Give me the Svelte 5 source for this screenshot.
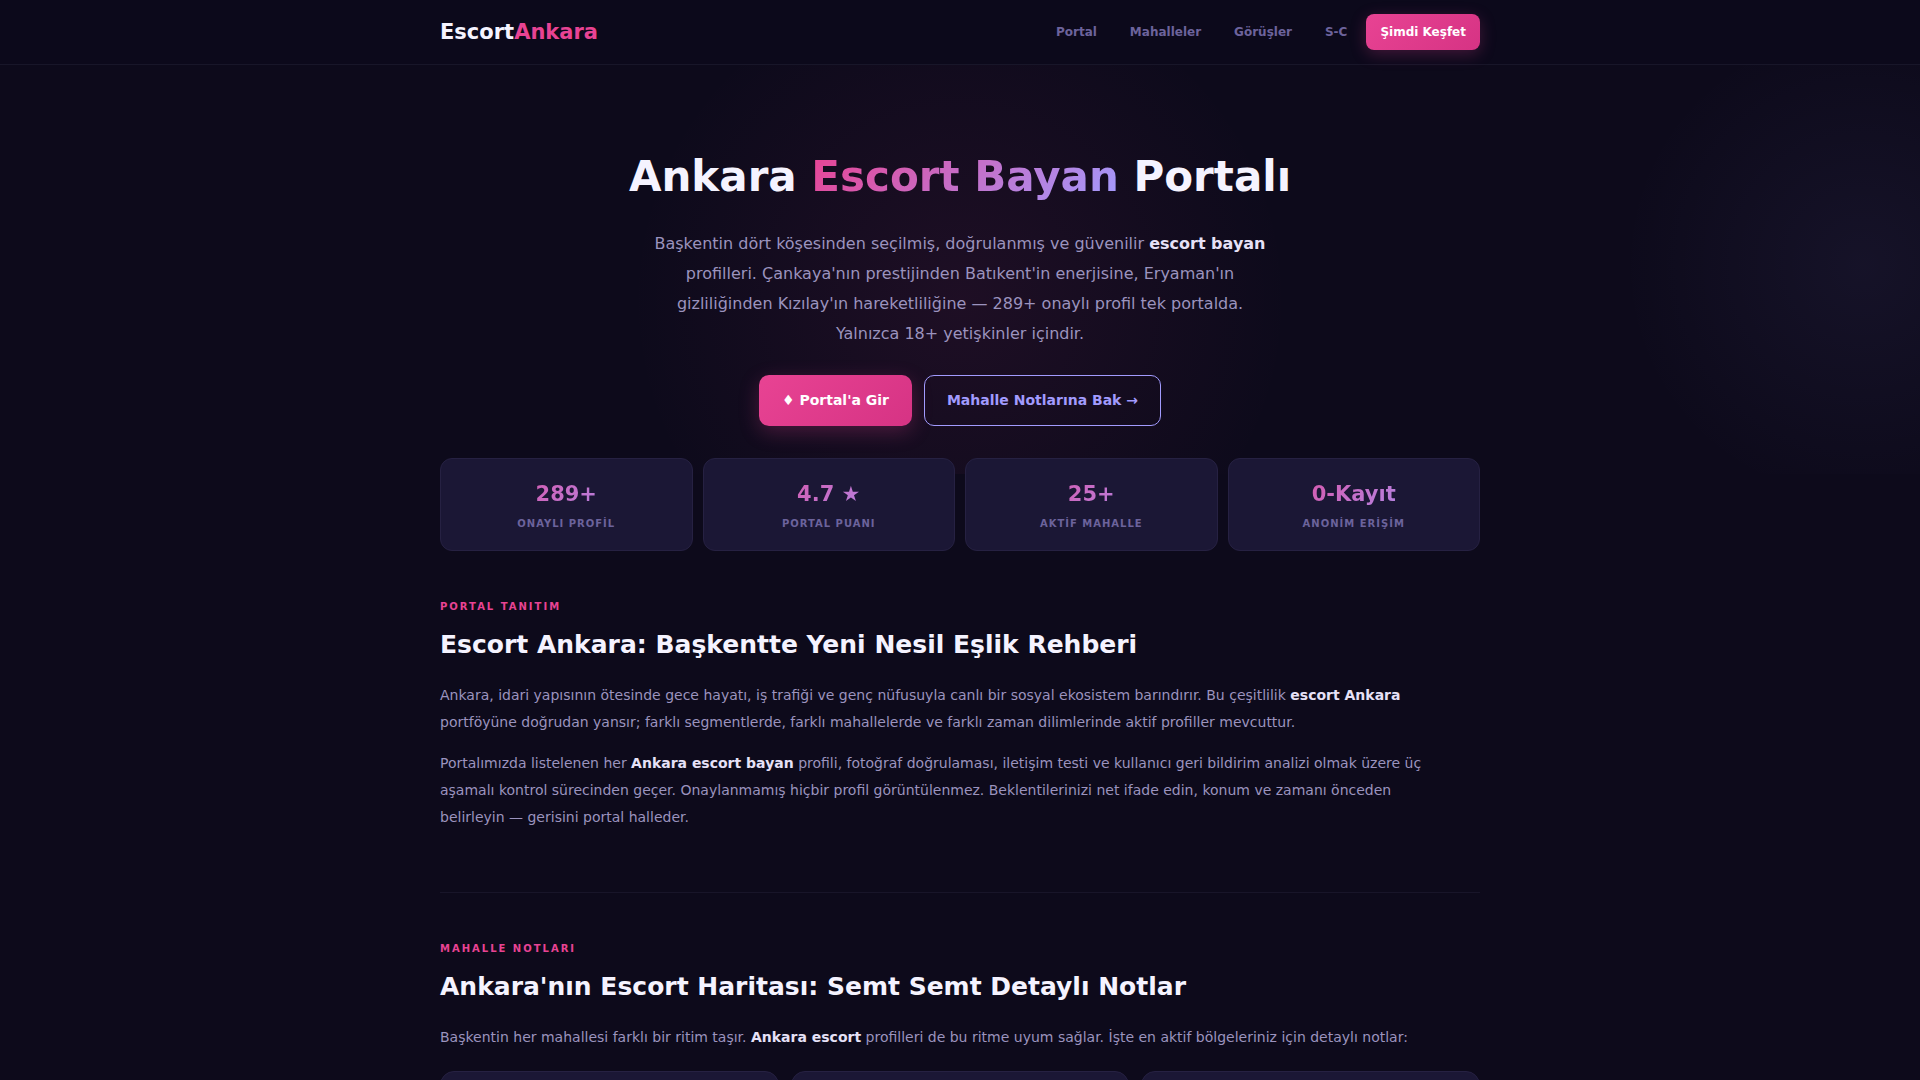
<script lang="ts">
  type Link = { label: string; href: string };
  type Stat = { value: string; label: string };

  const links: Link[] = [
    { label: 'Portal', href: '#portal' },
    { label: 'Mahalleler', href: '#mahalleler' },
    { label: 'Görüşler', href: '#gorusler' },
    { label: 'S-C', href: '#sc' }
  ];

  const stats: Stat[] = [
    { value: '289+', label: 'Onaylı Profil' },
    { value: '4.7 ★', label: 'Portal Puanı' },
    { value: '25+', label: 'Aktif Mahalle' },
    { value: '0-Kayıt', label: 'Anonim Erişim' }
  ];

  // Neighbourhood cards below the fold
  const cards = [1, 2, 3];
</script>

<div class="page" lang="tr">
  <header class="header">
    <div class="container bar">
      <a class="logo" href="#top">Escort<span>Ankara</span></a>
      <nav class="nav">
        {#each links as link}
          <a class="nav-link" href={link.href}>{link.label}</a>
        {/each}
        <a class="nav-cta" href="#portal">Şimdi Keşfet</a>
      </nav>
    </div>
  </header>

  <main class="container">
    <section class="hero" id="top">
      <h1>Ankara <span class="gradient">Escort Bayan</span> Portalı</h1>
      <p class="lead">
        Başkentin dört köşesinden seçilmiş, doğrulanmış ve güvenilir <strong>escort bayan</strong>
        profilleri. Çankaya'nın prestijinden Batıkent'in enerjisine, Eryaman'ın gizliliğinden
        Kızılay'ın hareketliliğine — 289+ onaylı profil tek portalda. Yalnızca 18+ yetişkinler
        içindir.
      </p>
      <div class="actions">
        <a class="btn primary" href="#portal">♦ Portal'a Gir</a>
        <a class="btn outline" href="#mahalleler">Mahalle Notlarına Bak →</a>
      </div>
    </section>

    <div class="stats">
      {#each stats as stat}
        <div class="stat">
          <div class="stat-value gradient">{stat.value}</div>
          <div class="stat-label">{stat.label}</div>
        </div>
      {/each}
    </div>

    <section class="section" id="portal">
      <div class="eyebrow">Portal Tanıtım</div>
      <h2>Escort Ankara: Başkentte Yeni Nesil Eşlik Rehberi</h2>
      <p>
        Ankara, idari yapısının ötesinde gece hayatı, iş trafiği ve genç nüfusuyla canlı bir sosyal
        ekosistem barındırır. Bu çeşitlilik <strong>escort Ankara</strong> portföyüne doğrudan
        yansır; farklı segmentlerde, farklı mahallelerde ve farklı zaman dilimlerinde aktif
        profiller mevcuttur.
      </p>
      <p>
        Portalımızda listelenen her <strong>Ankara escort bayan</strong> profili, fotoğraf
        doğrulaması, iletişim testi ve kullanıcı geri bildirim analizi olmak üzere üç aşamalı
        kontrol sürecinden geçer. Onaylanmamış hiçbir profil görüntülenmez. Beklentilerinizi net
        ifade edin, konum ve zamanı önceden belirleyin — gerisini portal halleder.
      </p>
    </section>

    <section class="section" id="mahalleler">
      <div class="eyebrow">Mahalle Notları</div>
      <h2>Ankara'nın Escort Haritası: Semt Semt Detaylı Notlar</h2>
      <p>
        Başkentin her mahallesi farklı bir ritim taşır. <strong>Ankara escort</strong> profilleri de
        bu ritme uyum sağlar. İşte en aktif bölgeleriniz için detaylı notlar:
      </p>
      <div class="cards">
        {#each cards as card (card)}
          <article class="card"></article>
        {/each}
      </div>
    </section>
  </main>
</div>

<style>
  :global(body) { margin: 0; background: #0d0a1b; }
  .page { --pink: #e84393; --violet: #a29bfe; --text: #f5f3ff; --muted: #9b93be; --dim: #6c639c; --card: #1b1735; --line: #262142; position: relative; height: 100vh; overflow: hidden; font-family: 'DejaVu Sans', sans-serif; color: var(--muted); }
  .page::before { content: ''; position: absolute; inset: 0 0 auto; height: 474px; background: radial-gradient(circle 330px at 50% 300px, rgba(232, 67, 147, 0.08), transparent), radial-gradient(circle 240px at 97% 265px, rgba(162, 155, 254, 0.06), transparent); }
  .container { position: relative; max-width: 1040px; margin: 0 auto; padding: 0 20px; }
  a { text-decoration: none; }
  strong { color: #e6e1f7; font-weight: 700; }
  .gradient { background: linear-gradient(135deg, var(--pink), var(--violet)); background-clip: text; -webkit-background-clip: text; color: transparent; }

  .header { position: relative; background: #0c091b; border-bottom: 1px solid #181629; }
  .bar { display: flex; align-items: center; justify-content: space-between; height: 64px; }
  .logo { font-size: 21px; font-weight: 700; color: var(--text); }
  .logo span { color: var(--pink); }
  .nav { display: flex; align-items: center; gap: 5px; }
  .nav-link { padding: 8px 14px; font-size: 12px; line-height: 20px; font-weight: 700; color: var(--dim); }
  .nav-cta { padding: 8px 14px; border-radius: 8px; font-size: 12px; line-height: 20px; font-weight: 700; color: #fff; background: linear-gradient(135deg, var(--pink), #d63384); box-shadow: 0 4px 16px rgba(232, 67, 147, 0.25); }

  .hero { padding: 80px 0 32px; text-align: center; }
  h1 { margin: 0 0 20px; font-size: 42px; line-height: 64px; font-weight: 700; color: var(--text); }
  .lead { max-width: 620px; margin: 0 auto 26px; font-size: 16px; line-height: 30px; }
  .actions { display: flex; justify-content: center; flex-wrap: wrap; gap: 12px; }
  .btn { padding: 14px 22px; border: 1px solid transparent; border-radius: 10px; font-size: 14px; line-height: 21px; font-weight: 700; }
  .primary { color: #fff; background: linear-gradient(135deg, var(--pink), #d63384) border-box; box-shadow: 0 6px 20px rgba(232, 67, 147, 0.25); }
  .outline { color: var(--violet); border-color: var(--violet); }

  .stats { display: grid; grid-template-columns: repeat(4, 1fr); gap: 10px; }
  .stat { padding: 18px 16px; border: 1px solid var(--line); border-radius: 12px; background: var(--card); text-align: center; }
  .stat-value { font-size: 21px; line-height: 34px; font-weight: 700; }
  .stat-label { margin-top: 4px; font-size: 10px; line-height: 17px; font-weight: 700; letter-spacing: 1px; text-transform: uppercase; color: var(--dim); }

  .section { padding: 48px 0 47px; border-bottom: 1px solid #181529; }
  .eyebrow { margin-bottom: 12px; font-size: 10px; line-height: 16px; font-weight: 700; letter-spacing: 2px; text-transform: uppercase; color: var(--pink); }
  h2 { margin: 0 0 19px; font-size: 25px; line-height: 36px; font-weight: 700; color: var(--text); }
  .section p { max-width: 1000px; margin: 0 0 14px; font-size: 14px; line-height: 27px; }
  .cards { display: grid; grid-template-columns: repeat(3, 1fr); gap: 12px; margin-top: 20px; }
  .card { min-height: 200px; border: 1px solid var(--line); border-radius: 14px; background: var(--card); }
</style>
